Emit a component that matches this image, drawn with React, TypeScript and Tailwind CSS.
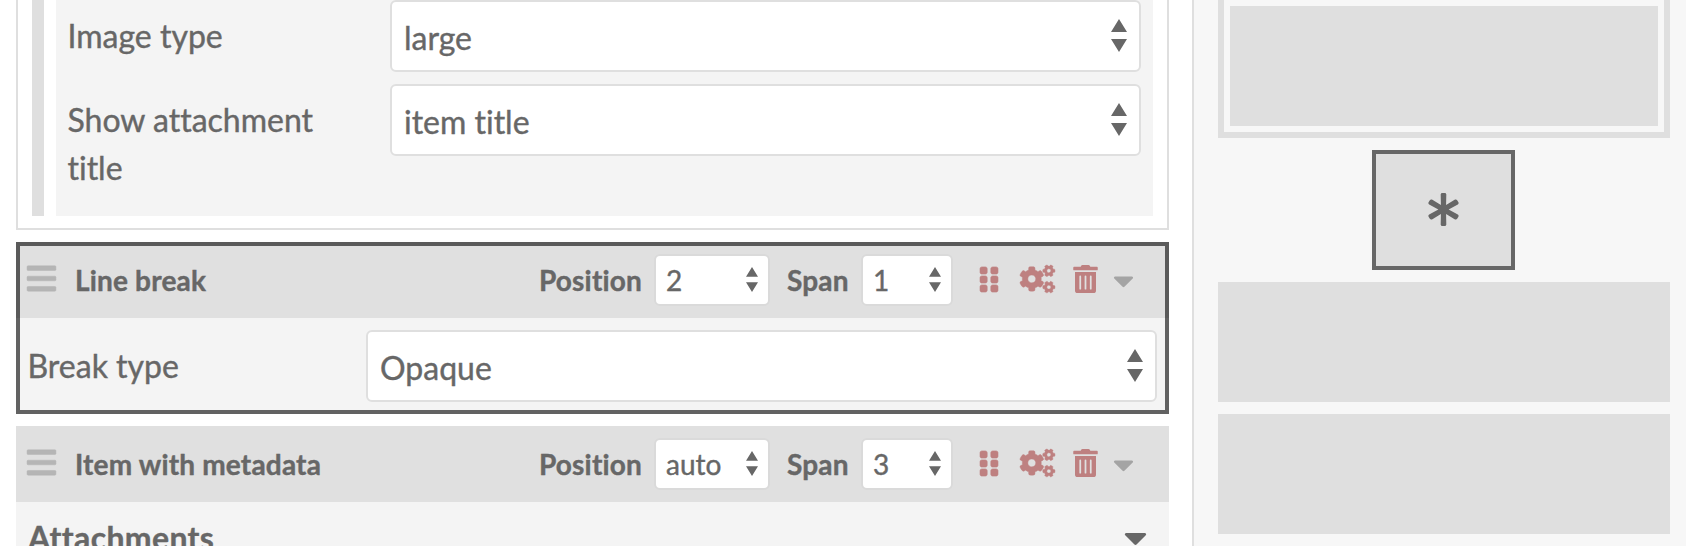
import type { ReactNode } from "react";
import { FaAsterisk, FaBars, FaCaretDown, FaCogs, FaGripVertical, FaTrashAlt } from "react-icons/fa";

function Arrows({ className }: { className: string }) {
  return (
    <svg viewBox="0 0 16 33" preserveAspectRatio="none" className={className} fill="#676767">
      <path d="M8 0L16 13H0zM0 20H16L8 33z" />
    </svg>
  );
}

function Select({ value }: { value: string }) {
  return (
    <div className="flex h-[72px] grow items-center justify-between rounded-md border-2 border-[#dfdfdf] bg-white pr-3 pl-3">
      <span className="pt-[3px]">{value}</span>
      <Arrows className="mb-[2px] h-[33px] w-4" />
    </div>
  );
}

function SmallSelect({ value, className }: { value: string; className: string }) {
  return (
    <div
      className={`flex h-[52px] shrink-0 items-center justify-between rounded-md border-2 border-[#dadada] bg-white pr-[10px] pl-[10px] ${className}`}
    >
      <span>{value}</span>
      <Arrows className="mb-[2px] h-[25px] w-3" />
    </div>
  );
}

function BlockHeader({ title, position, span }: { title: string; position: string; span: string }) {
  return (
    <div className="flex h-[76px] items-center bg-[#e0e0e0] pl-[11px] text-[28px] leading-[42px]">
      <FaBars className="mb-[3px] h-[33px] w-[29px] overflow-visible stroke-[#b5b5b5] text-[#b5b5b5] [stroke-width:8]" />
      <span className="ml-[19px] w-[464px] font-bold tracking-[0.18px]">{title}</span>
      <span className="w-[115px] font-bold tracking-[0.18px]">Position</span>
      <SmallSelect value={position} className="w-[116px]" />
      <span className="w-[91px] pl-[17px] font-bold tracking-[0.18px]">Span</span>
      <SmallSelect value={span} className="w-[92px]" />
      <div className="flex items-center pb-[2px] pl-[27px] text-[#be8080]">
        <FaGripVertical className="h-[29px] w-[18px] overflow-visible stroke-[#be8080] [stroke-width:10]" />
        <FaCogs className="ml-[22px] h-7 w-[35px] overflow-visible stroke-[#be8080] [stroke-width:8]" />
        <FaTrashAlt className="ml-[18px] h-7 w-[25px]" />
        <FaCaretDown className="mt-[2px] ml-[15px] h-[33px] w-[21px] text-[#a4a4a4]" />
      </div>
    </div>
  );
}

function Field({ label, value, className }: { label: string; value: string; className: string }) {
  return (
    <div className="flex items-start">
      <span className={`shrink-0 pt-3 ${className}`}>{label}</span>
      <Select value={value} />
    </div>
  );
}

function Block({ selected, children }: { selected?: boolean; children: ReactNode }) {
  return (
    <section className="relative bg-[#f4f4f4]">
      {children}
      {selected && <div className="pointer-events-none absolute inset-0 border-4 border-black/60" />}
    </section>
  );
}

export default function App() {
  return (
    <div className="flex h-[546px] w-[1686px] overflow-hidden bg-white font-['Lato',sans-serif] text-[32px] leading-[48px] text-[#676767] [-webkit-text-stroke:0.4px_#676767] [font-variant-ligatures:none]">
      <main className="flex w-[1192px] shrink-0 flex-col gap-3 pr-[23px] pl-4">
        <section className="flex h-[230px] shrink-0 gap-3 border-2 border-t-0 border-[#dfdfdf] pr-[14px] pb-3 pl-[14px]">
          <div className="w-3 shrink-0 bg-[#dfdfdf]" />
          <div className="flex grow flex-col gap-3 bg-[#f4f4f4] pr-3 pl-[11.5px]">
            <Field label="Image type" value="large" className="w-[322.5px]" />
            <Field label="Show attachment title" value="item title" className="w-[322.5px] pr-16" />
          </div>
        </section>

        <Block selected>
          <BlockHeader title="Line break" position="2" span="1" />
          <div className="h-24 pt-3 pr-3 pl-[11.5px]">
            <Field label="Break type" value="Opaque" className="w-[338.5px]" />
          </div>
        </Block>

        <Block>
          <BlockHeader title="Item with metadata" position="auto" span="3" />
          <div className="flex h-24 items-start justify-between pt-3 pr-[22px] pl-3 font-bold">
            <span className="tracking-[0.35px]">Attachments</span>
            <FaCaretDown className="mt-[5px] h-[37px] w-[23px]" />
          </div>
        </Block>
      </main>

      <aside className="flex grow flex-col items-center gap-3 border-l-2 border-[#dfdfdf] bg-[#f7f7f7] pr-4 pl-6">
        <div className="h-[138px] w-full shrink-0 border-[6px] border-t-0 border-[#dfdfdf] p-[6px]">
          <div className="h-full bg-[#dfdfdf]" />
        </div>
        <div className="mr-[1px] flex h-[120px] w-[143px] shrink-0 items-center justify-center border-4 border-[#676767] bg-[#dfdfdf]">
          <FaAsterisk className="mb-[1px] h-[33px] w-[33px]" />
        </div>
        <div className="h-[120px] w-full shrink-0 bg-[#dfdfdf]" />
        <div className="h-[120px] w-full shrink-0 bg-[#dfdfdf]" />
      </aside>
    </div>
  );
}
